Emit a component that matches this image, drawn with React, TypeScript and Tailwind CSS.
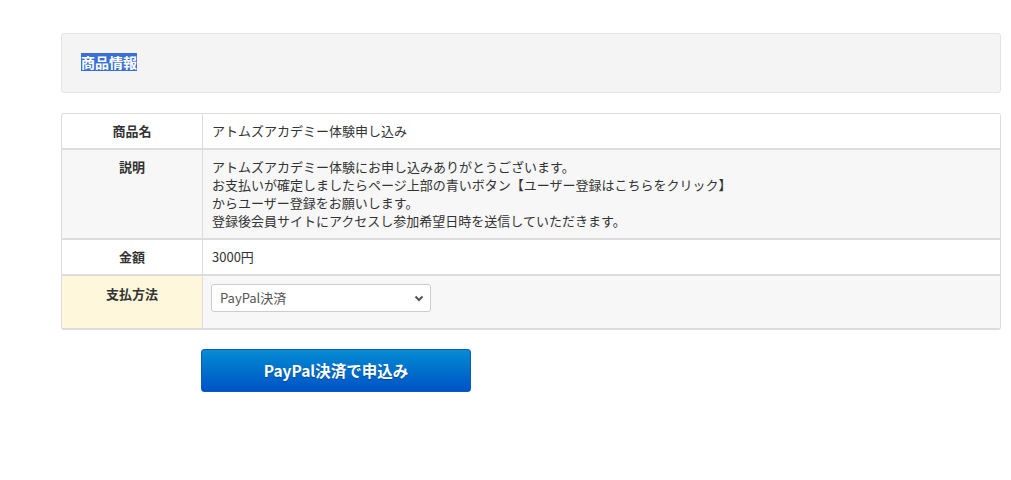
import React from "react";

export default function App() {
  const font = { fontFamily: '"Noto Sans CJK JP", "Noto Sans", sans-serif' };
  return (
    <div className="min-h-[480px] w-full bg-white text-[#333]" style={font}>
      <div className="ml-[61px] w-[940px] pt-[33px]">
        <div className="flex h-[60px] items-center rounded-[3px] border border-[#e3e3e3] bg-[#f4f4f4] pl-[19px]">
          <span className="-mt-[2px] bg-[#3a6fd6] text-[14px] font-bold leading-[18px] text-white">商品情報</span>
        </div>

        <div className="mt-[20px] overflow-hidden rounded-[3px] border border-b-2 border-[#dcdcdc] text-[13px] leading-[18px]">
          <div className="flex border-b-2 border-[#dcdcdc] bg-white">
            <div className="w-[141px] shrink-0 border-r border-[#dcdcdc] py-[8px] text-center font-bold">商品名</div>
            <div className="flex-1 px-[9px] py-[8px]">アトムズアカデミー体験申し込み</div>
          </div>
          <div className="flex border-b-2 border-[#dcdcdc] bg-[#f7f7f7]">
            <div className="w-[141px] shrink-0 border-r border-[#dcdcdc] py-[8px] text-center font-bold">説明</div>
            <div className="flex-1 px-[9px] py-[8px]">
              アトムズアカデミー体験にお申し込みありがとうございます。
              <br />
              お支払いが確定しましたらページ上部の青いボタン【ユーザー登録はこちらをクリック】
              <br />
              からユーザー登録をお願いします。
              <br />
              登録後会員サイトにアクセスし参加希望日時を送信していただきます。
            </div>
          </div>
          <div className="flex border-b-2 border-[#dcdcdc] bg-white">
            <div className="w-[141px] shrink-0 border-r border-[#dcdcdc] py-[8px] text-center font-bold">金額</div>
            <div className="flex-1 px-[9px] py-[8px]">3000円</div>
          </div>
          <div className="flex h-[52px] bg-[#f7f7f7]">
            <div className="w-[141px] shrink-0 border-r border-[#dcdcdc] bg-[#fff7dc] pt-[9px] text-center font-bold">支払方法</div>
            <div className="flex-1 px-[8px] pt-[8px]">
              <div className="flex h-[28px] w-[220px] items-center justify-between rounded-[3px] border border-[#cccccc] bg-white pl-[8px] pr-[6px] text-[#555]">
                <span>PayPal決済</span>
                <svg width="10" height="7" viewBox="0 0 10 7" fill="none">
                  <path d="M1.5 1.5 L5 5 L8.5 1.5" stroke="#555" strokeWidth="2" />
                </svg>
              </div>
            </div>
          </div>
        </div>

        <button
          className="ml-[140px] mt-[19px] flex h-[43px] w-[270px] items-center justify-center rounded-[3px] border border-[#0a5cbc] bg-gradient-to-b from-[#0a8bd2] to-[#0052c6] text-[15.5px] font-bold text-white"
          style={{ textShadow: "0 1px 1px rgba(0,0,0,0.3)", ...font }}
        >
          PayPal決済で申込み
        </button>
      </div>
    </div>
  );
}
